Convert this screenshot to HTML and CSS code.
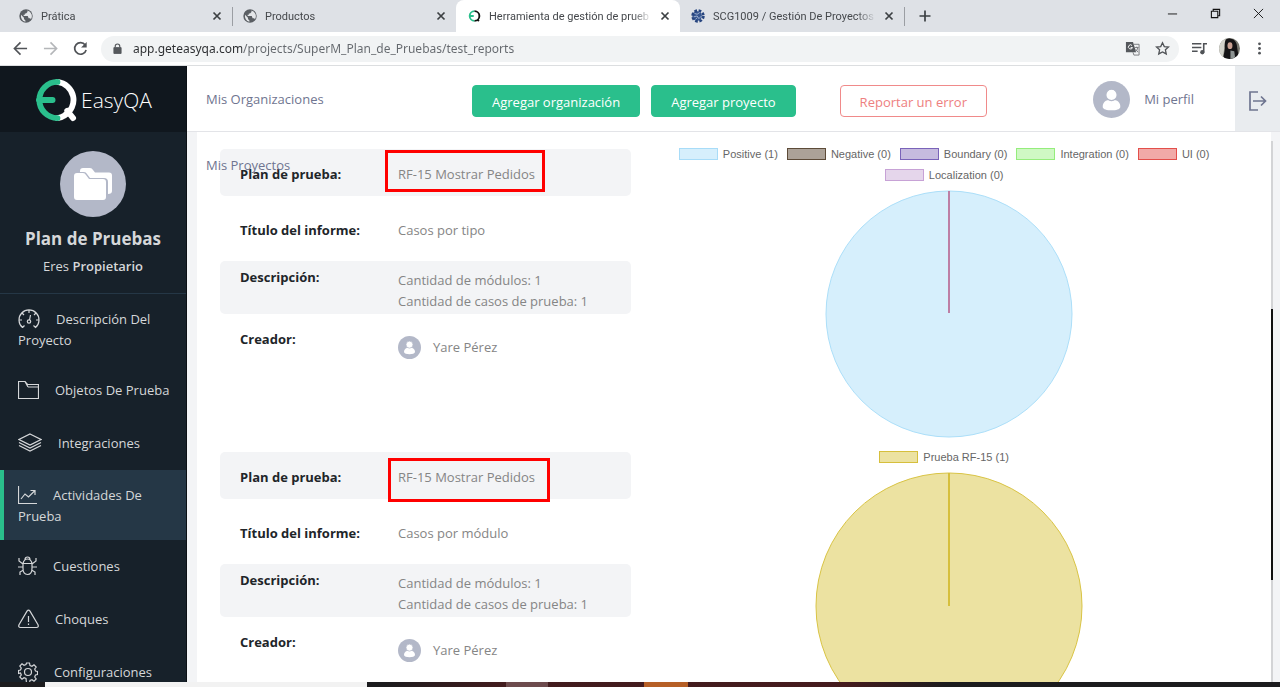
FILE: index.html
```html
<!DOCTYPE html>
<html lang="es">
<head>
  <meta charset="UTF-8" />
  <meta name="viewport" content="width=device-width, initial-scale=1.0" />
  <title>Herramienta de gestión de pruebas</title>
  <link rel="stylesheet" href="styles.css">
</head>
<body>
  <svg class="defs" aria-hidden="true">
    <symbol id="globe" viewBox="0 0 24 24">
      <circle cx="12" cy="12" r="11.5" fill="#5a5e63"/>
      <path d="M3.5 10l5 5v2l2.500 2.500v2.500A10 10 0 0 1 3.500 10z" fill="#e4e6e9"/>
      <path d="M14.500 2.500v2.500l-2.500 2.500H10V10H8v2h7l1.500 4H19l1.500 1.500A10 10 0 0 0 14.500 2.500z" fill="#e4e6e9"/>
    </symbol>
    <symbol id="close" viewBox="0 0 10 10">
      <path d="M1.500 1.500l7 7M8.500 1.500l-7 7" stroke="#3c4043" stroke-width="1.700"/>
    </symbol>
    <symbol id="user" viewBox="0 0 36 36">
      <circle cx="18" cy="18" r="18" fill="#b3b8c8"/>
      <path d="M18 18c6 0 9 3.500 8.500 7.500-.3 2-4 3-8.500 3s-8.200-1-8.500-3C9 21.500 12 18 18 18z" fill="#fff"/>
      <circle cx="18" cy="13.500" r="5.500" fill="#fff" stroke="#b3b8c8" stroke-width="1.200"/>
    </symbol>
  </svg>

  <div class="tabs">
    <div class="tab">
      <svg class="favicon"><use href="#globe"/></svg>
      <span class="tab-title">Prática</span>
      <button class="tab-close" aria-label="Cerrar"><svg><use href="#close"/></svg></button>
    </div>
    <div class="tab divided">
      <svg class="favicon"><use href="#globe"/></svg>
      <span class="tab-title">Productos</span>
      <button class="tab-close" aria-label="Cerrar"><svg><use href="#close"/></svg></button>
    </div>
    <div class="tab active">
      <svg class="favicon" viewBox="-4 -4 52 52" fill="none" stroke-width="7">
        <path d="M24 4a18 18 0 0 0 0 36M8 22h13" stroke="#2abf8c"/>
        <path d="M24 4a18 18 0 0 1 0 36M34 34l6 7" stroke="#111"/>
      </svg>
      <span class="tab-title">Herramienta de gestión de prueb</span>
      <button class="tab-close" aria-label="Cerrar"><svg><use href="#close"/></svg></button>
    </div>
    <div class="tab">
      <svg class="favicon" viewBox="0 0 16 16">
        <circle cx="7" cy="8" r="5.500" fill="#36558f"/>
        <circle cx="8" cy="8" r="6.200" fill="none" stroke="#27457f" stroke-width="3" stroke-dasharray="3 1.870"/>
        <path d="M4 5l3 1 3-2M3 9l4-1 2 3 3-3M5 12l2-2" stroke="#a9b9d6" fill="none"/>
      </svg>
      <span class="tab-title">SCG1009 / Gestión De Proyectos</span>
      <button class="tab-close" aria-label="Cerrar"><svg><use href="#close"/></svg></button>
    </div>
    <button class="new-tab" aria-label="Nueva pestaña">
      <svg viewBox="0 0 12 12"><path d="M6 .5v11M.5 6h11" stroke="#3c4043" stroke-width="1.700"/></svg>
    </button>
    <div class="window-buttons">
      <button aria-label="Minimizar"><svg viewBox="0 0 12 12"><path d="M1 6.500h10" stroke="#111"/></svg></button>
      <button aria-label="Restaurar"><svg viewBox="0 0 12 12" fill="none" stroke="#111" stroke-width="1.200"><path d="M1.500 3.500h7v7h-7zM3.500 3.500v-2h7v7h-2"/></svg></button>
      <button aria-label="Cerrar ventana"><svg viewBox="0 0 12 12"><path d="M1 1l10 10M11 1L1 11" stroke="#111"/></svg></button>
    </div>
  </div>

  <div class="toolbar">
    <button class="tool" aria-label="Atrás"><svg viewBox="0 0 16 16" fill="none" stroke="#505357" stroke-width="1.700"><path d="M15 8H2M8 1.500L1.500 8 8 14.500"/></svg></button>
    <button class="tool" aria-label="Adelante"><svg viewBox="0 0 16 16" fill="none" stroke="#b4b6b9" stroke-width="1.700"><path d="M1 8h13M8 1.500L14.500 8 8 14.500"/></svg></button>
    <button class="tool" aria-label="Recargar"><svg viewBox="0 0 16 16"><path d="M13 4.200A6.200 6.200 0 1 0 14 9.500" fill="none" stroke="#505357" stroke-width="1.800"/><path d="M14.600 1v6H8.600z" fill="#505357"/></svg></button>
    <div class="omnibox">
      <svg class="lock" viewBox="0 0 10 12"><path d="M1 5h8v6.500H1z" fill="#55585c" stroke="#55585c" stroke-linejoin="round"/><path d="M2.500 5V3.500a2.500 2.500 0 0 1 5 0V5" fill="none" stroke="#55585c" stroke-width="1.300"/></svg>
      <input class="url" type="text" aria-label="Dirección" value="app.geteasyqa.com/projects/SuperM_Plan_de_Pruebas/test_reports">
      <button class="tool" aria-label="Traducir">
        <svg viewBox="0 0 16 16"><path d="M1 1h7.500l3.500 11H1z" fill="#55585c"/><path d="M9.500 3.500h5.500v11.500H9.500L8.500 12" fill="none" stroke="#777a7e"/><path d="M7.500 4.800A2.200 2.200 0 1 0 8 7H6" fill="none" stroke="#fff"/><path d="M10.500 7h4M12.500 6v1M13.500 7c0 2-1.500 4-2.500 4.500M11.500 9l2.500 3" fill="none" stroke="#777a7e"/></svg>
      </button>
      <button class="tool" aria-label="Marcador">
        <svg viewBox="0 0 16 16"><path d="M8 1.800l1.900 4.100 4.500.5-3.300 3 .9 4.400-4-2.200-4 2.200.9-4.400-3.300-3 4.500-.5z" fill="none" stroke="#505357" stroke-width="1.400"/></svg>
      </button>
    </div>
    <button class="tool" aria-label="Multimedia"><svg viewBox="0 0 16 16"><path d="M0 3h10M0 7h10M0 11h6M12.500 12V3H16" fill="none" stroke="#505357" stroke-width="1.700"/><circle cx="11" cy="12" r="2.300" fill="#505357"/></svg></button>
    <button class="tool profile" aria-label="Perfil">
      <svg viewBox="0 0 22 22">
        <clipPath id="round"><circle cx="11" cy="11" r="11"/></clipPath>
        <g clip-path="url(#round)">
          <path d="M0 0h22v22H0z" fill="#77776f"/>
          <path d="M0 0h7l-3 22H0z" fill="#d3d3cb"/>
          <path d="M8 1c7-2 11 3 11 9l2 12H5c-1-5 2-8 1-13 0-4 0-6 2-8z" fill="#151416"/>
          <ellipse cx="11.500" cy="8" rx="2.600" ry="3.600" fill="#c9a193"/>
          <path d="M12 13l4 1 1 8h-5z" fill="#8d9392"/>
        </g>
      </svg>
    </button>
    <button class="tool" aria-label="Menú"><svg viewBox="0 0 16 16" fill="#505357"><circle cx="8" cy="3" r="1.500"/><circle cx="8" cy="8" r="1.500"/><circle cx="8" cy="13" r="1.500"/></svg></button>
  </div>

  <div class="app">
    <aside class="sidebar">
      <a class="logo" href="#">
        <svg viewBox="0 0 44 44" fill="none" stroke-linecap="round">
          <path d="M24 3.500a18.500 18.500 0 0 1 7 34.500q-3 2-7 2.500M34 33l6 7.500" stroke="#fff" stroke-width="6"/>
          <path d="M24 3.500A18.500 18.500 0 1 0 24 40.500M5 22h14" stroke="#2abf8c" stroke-width="6"/>
        </svg>
        <span>EasyQA</span>
      </a>
      <div class="project">
        <svg class="project-icon" viewBox="0 0 66 66">
          <circle cx="33" cy="33" r="33" fill="#b3b8c8"/>
          <path d="M20 21v-1q0-3 3-3h7q2 0 3 2l2 2.500h14q3 0 3 3V40q0 3-4 3V31q0-4-4-4H30l-3-4q-1-2-3-2z" fill="#fff"/>
          <path d="M14 25q0-3 3-3h6q2 0 3 2l3 4h14q3 0 3 3v15q0 3-3 3H17q-3 0-3-3z" fill="#fff"/>
        </svg>
        <h2>Plan de Pruebas</h2>
        <p>Eres <strong>Propietario</strong></p>
      </div>
      <nav class="menu">
        <a href="#">
          <svg width="22" height="20" viewBox="0 0 22 20"><path d="M4.500 18.500a10 10 0 1 1 13 0l-2-2M4.500 18.500l2-2M11 1v3M4 4l2 2M18 4l-2 2M1 11h3M21 11h-3M12.500 6l-1 5"/><circle cx="11" cy="12.500" r="1.700"/></svg>Descripción Del Proyecto</a>
        <a href="#">
          <svg width="21" height="20" viewBox="0 0 21 20"><path d="M.5 18.500v-17H7l2.500 3h11v14zM10 7h10.500M7 1.500L10 7"/></svg>Objetos De Prueba</a>
        <a href="#">
          <svg width="24" height="20" viewBox="0 0 24 20"><path d="M12 1l11 5.500L12 12 1 6.500zM1 9.500L12 15l11-5.500M1 12.500L12 18l11-5.500"/></svg>Integraciones</a>
        <a class="current" href="#">
          <svg width="19" height="20" viewBox="0 0 19 20"><path d="M.5 1v17.500H19M3 14l4-5 3.500 3 6.500-6.500M12.500 5.500H17V10"/></svg>Actividades De Prueba</a>
        <a href="#">
          <svg width="19" height="20" viewBox="0 0 19 20"><path d="M5 7.500h9v5q0 6-4.500 6T5 12.500zM5 7.500Q6 3 9.500 3T14 7.500M7 3.500Q7 1 9.500 1T12 3.500M1 2v3l4 3M18 2v3l-4 3M0 11h5M14 11h5M5.500 14L2 16v3M13.500 14l3.500 2v3"/></svg>Cuestiones</a>
        <a href="#">
          <svg width="21" height="20" viewBox="0 0 21 20"><path d="M9 2.200q1.500-2 3 0l8 13.500q1 2.800-1.500 2.800h-16q-2.500 0-1.500-2.800zM10.500 7v6M10.500 14.500v1.500"/></svg>Choques</a>
        <a href="#">
          <svg width="20" height="20" viewBox="0 0 20 20"><circle cx="10" cy="10" r="3.500"/><path d="M8.500 1h3l.5 2.500 2 .8 2-1.500 2.200 2.200-1.500 2 .8 2 2 .5v3l-2 .5-.8 2 1.500 2-2.200 2.200-2-1.500-2 .8-.5 2.500h-3L8 16.500l-2-.8-2 1.500L1.800 15l1.500-2-.8-2L.5 11.500v-3L2.500 8l.8-2-1.500-2L4 1.800l2 1.500 2-.8z"/></svg>Configuraciones</a>
      </nav>
    </aside>

    <div class="page">
      <header class="header">
        <nav class="links">
          <a href="#">Mis Organizaciones</a>
          <a href="#">Mis Proyectos</a>
        </nav>
        <div class="actions">
          <button class="btn">Agregar organización</button>
          <button class="btn">Agregar proyecto</button>
          <button class="btn btn-outline">Reportar un error</button>
        </div>
        <a class="me" href="#">
          <svg><use href="#user"/></svg>
          <span>Mi perfil</span>
        </a>
        <button class="logout" aria-label="Salir">
          <svg viewBox="0 0 18 20" fill="none" stroke="#6f7590" stroke-width="1.700"><path d="M9 1H1v18h8M4 10h12.500M12 5.500l4.500 4.500-4.500 4.500"/></svg>
        </button>
      </header>

      <main class="content">
        <div class="panel">
          <section class="report">
            <dl class="details">
              <div class="row shaded">
                <dt>Plan de prueba:</dt>
                <dd class="marked">RF-15 Mostrar Pedidos<span class="mark"></span></dd>
              </div>
              <div class="row">
                <dt>Título del informe:</dt>
                <dd>Casos por tipo</dd>
              </div>
              <div class="row tall shaded">
                <dt>Descripción:</dt>
                <dd>Cantidad de módulos: 1<br>Cantidad de casos de prueba: 1</dd>
              </div>
              <div class="row tall">
                <dt>Creador:</dt>
                <dd class="creator"><svg><use href="#user"/></svg>Yare Pérez</dd>
              </div>
            </dl>
            <div class="chart">
              <ul class="legend">
                <li><i class="swatch positive"></i>Positive (1)</li>
                <li><i class="swatch negative"></i>Negative (0)</li>
                <li><i class="swatch boundary"></i>Boundary (0)</li>
                <li><i class="swatch integration"></i>Integration (0)</li>
                <li><i class="swatch ui"></i>UI (0)</li>
                <li><i class="swatch localization"></i>Localization (0)</li>
              </ul>
              <svg class="pie" viewBox="0 0 248 248">
                <circle cx="124" cy="124" r="123" fill="#d6effc" stroke="#acdff9"/>
                <path d="M124 1v122" stroke="#bd7fa5" stroke-width="2"/>
              </svg>
            </div>
          </section>

          <section class="report">
            <dl class="details">
              <div class="row shaded">
                <dt>Plan de prueba:</dt>
                <dd class="marked">RF-15 Mostrar Pedidos<span class="mark mark-low"></span></dd>
              </div>
              <div class="row">
                <dt>Título del informe:</dt>
                <dd>Casos por módulo</dd>
              </div>
              <div class="row tall shaded">
                <dt>Descripción:</dt>
                <dd>Cantidad de módulos: 1<br>Cantidad de casos de prueba: 1</dd>
              </div>
              <div class="row tall">
                <dt>Creador:</dt>
                <dd class="creator"><svg><use href="#user"/></svg>Yare Pérez</dd>
              </div>
            </dl>
            <div class="chart">
              <ul class="legend">
                <li><i class="swatch module"></i>Prueba RF-15 (1)</li>
              </ul>
              <svg class="pie pie-large" viewBox="0 0 268 268">
                <circle cx="134" cy="134" r="133" fill="#ece2a1" stroke="#d9c445"/>
                <path d="M134 1v133" stroke="#d6bf3c" stroke-width="2"/>
              </svg>
            </div>
          </section>
        </div>
        <div class="scroll"><div class="thumb"></div></div>
      </main>
    </div>
  </div>

  <div class="taskbar">
    <span class="search"></span>
    <span class="task"></span>
    <span class="task-open"></span>
  </div>
</body>
</html>
```
FILE: styles.css
```css
:root {
  --green: #2abf8c;
  --side: #17212a;
  --side-dark: #10171e;
  --side-active: #253746;
  --muted: #6f7590;
  --text: #212529;
  --value: #858585;
  --gray: #f3f4f6;
}

* {
  box-sizing: border-box;
}

body {
  margin: 0;
  height: 100vh;
  overflow: hidden;
  display: flex;
  flex-direction: column;
  font-family: "Open Sans", "Noto Sans", sans-serif;
  font-size: 13px;
  line-height: 21px;
  color: var(--text);
}

button {
  padding: 0;
  border: none;
  background: none;
  font: inherit;
  cursor: pointer;
}

a {
  color: inherit;
  text-decoration: none;
}

svg {
  display: block;
  flex-shrink: 0;
}

.defs {
  position: absolute;
  width: 0;
  height: 0;
}

/* browser tabs */
.tabs {
  display: flex;
  flex-shrink: 0;
  height: 32px;
  padding-left: 8px;
  background: #dee1e6;
}

.tab {
  display: flex;
  align-items: center;
  flex: 0 1 224px;
  min-width: 0;
  padding: 0 10px 0 11px;
  font-family: Roboto, "Open Sans", sans-serif;
  font-size: 11px;
  color: #45484c;
}

.tab.divided {
  background: linear-gradient(#9b9ea3, #9b9ea3) left center / 1px 19px no-repeat;
}

.tab.active {
  background: #fff;
  border-radius: 8px 8px 0 0;
}

.favicon {
  width: 14px;
  height: 14px;
  margin-right: 8px;
}

.tab-title {
  flex: 1;
  overflow: hidden;
  white-space: nowrap;
  -webkit-mask-image: linear-gradient(90deg, #000 88%, transparent);
  mask-image: linear-gradient(90deg, #000 88%, transparent);
}

.tab-close {
  margin-left: 8px;
}

.tab-close svg {
  width: 10px;
  height: 10px;
}

.new-tab {
  width: 42px;
  background: linear-gradient(#9b9ea3, #9b9ea3) left center / 1px 19px no-repeat;
}

.new-tab svg {
  width: 12px;
  height: 12px;
  margin: 0 auto;
}

.window-buttons {
  display: flex;
  margin-left: auto;
}

.window-buttons button {
  width: 43px;
  height: 27px;
}

.window-buttons svg {
  width: 11px;
  height: 11px;
  margin: 0 auto;
}

/* address bar */
.toolbar {
  display: flex;
  align-items: center;
  flex-shrink: 0;
  height: 34px;
  padding: 0 6px 0 5px;
  border-bottom: 1px solid #dcdee0;
  background: #fff;
}

.tool {
  width: 30px;
}

.tool svg {
  width: 15px;
  height: 15px;
  margin: 0 auto;
}

.tool.profile svg {
  width: 21px;
  height: 21px;
}

.omnibox {
  display: flex;
  align-items: center;
  flex: 1;
  height: 26px;
  margin: 0 5px 0 6px;
  padding: 0 2px 0 12px;
  border-radius: 13px;
  background: #f1f3f4;
}

.lock {
  width: 9px;
  height: 11px;
  margin-right: 11px;
}

/* the host part of the address is darker than the path */
.url {
  flex: 1;
  padding: 0;
  border: none;
  outline: none;
  font-family: "Noto Sans", "Open Sans", sans-serif;
  font-size: 12px;
  background: linear-gradient(90deg, #2b2d30 109px, #64686d 109px);
  -webkit-background-clip: text;
  background-clip: text;
  -webkit-text-fill-color: transparent;
}

/* application */
.app {
  display: flex;
  flex: 1;
  min-height: 0;
}

.sidebar {
  width: 187px;
  flex-shrink: 0;
  overflow: hidden;
  border-right: 1px solid #0b1015;
  background: var(--side);
  color: #d5d7d9;
}

.logo {
  display: flex;
  align-items: center;
  justify-content: center;
  gap: 4px;
  height: 66px;
  padding-top: 2px;
  background: var(--side-dark);
  color: #fff;
  font-size: 21px;
  font-weight: 300;
}

.logo svg {
  width: 43px;
  height: 44px;
}

.project {
  height: 162px;
  padding-top: 19px;
  border-bottom: 1px solid var(--side-active);
  text-align: center;
}

.project-icon {
  width: 66px;
  height: 66px;
  margin: 0 auto;
}

.project h2 {
  margin: 11px 0 7px;
  font-size: 17px;
  line-height: 21px;
}

.project p {
  margin: 0;
}

.project strong {
  font-weight: 600;
}

.menu a {
  display: block;
  padding: 16px 14px 16px 18px;
}

.menu a:first-child,
.menu a.current {
  padding-top: 15px;
  padding-bottom: 13px;
}

.menu a.current {
  padding-left: 14px;
  border-left: 4px solid var(--green);
  background: var(--side-active);
}

.menu svg {
  display: inline-block;
  margin: -6px 16px -2px 0;
  vertical-align: middle;
  fill: none;
  stroke: #d5d7d9;
  stroke-width: 1.2;
}

.page {
  display: flex;
  flex-direction: column;
  flex: 1;
  min-width: 0;
}

.header {
  position: relative;
  z-index: 1;
  display: flex;
  align-items: center;
  flex-shrink: 0;
  height: 66px;
  padding-left: 19px;
  border-bottom: 1px solid #e3e4e8;
  background: #fff;
  color: var(--muted);
}

.links {
  align-self: flex-start;
  width: 266px;
  height: 65px;
}

.links a {
  display: block;
  width: max-content;
  line-height: 66px;
}

.actions {
  display: flex;
  gap: 11px;
  padding-top: 5px;
}

.btn {
  height: 32px;
  padding: 2px 19px 0;
  border: 1px solid var(--green);
  border-radius: 4px;
  background: var(--green);
  color: #fff;
  font-weight: 500;
}

.btn-outline {
  margin-left: 33px;
  border-color: #f08a8a;
  background: #fff;
  color: #ee8080;
  font-weight: 400;
}

.me {
  display: flex;
  align-items: center;
  gap: 14px;
  margin-left: auto;
  margin-right: 41px;
  padding-top: 1px;
}

.me svg {
  width: 37px;
  height: 37px;
}

.logout {
  align-self: stretch;
  width: 45px;
  background: #e9ecef;
}

.logout svg {
  width: 18px;
  height: 20px;
  margin: 4px auto 0;
}

.content {
  display: flex;
  flex: 1;
  min-height: 0;
  padding-left: 10px;
  background: var(--gray);
}

.panel {
  flex: 1;
  overflow: hidden;
  padding: 17px 34px 0 23px;
  background: #fff;
}

.report {
  display: grid;
  grid-template-columns: 5fr 7fr;
  gap: 30px;
  height: 303px;
}

.details {
  margin: 0;
}

.row {
  display: grid;
  grid-template-columns: 158px 1fr;
  margin-bottom: 9px;
  padding: 15px 0 11px 20px;
  border-radius: 5px;
}

.row.shaded {
  background: var(--gray);
}

.row.tall {
  padding-top: 6px;
  padding-bottom: 2px;
}

.row.tall dd {
  padding-top: 3px;
}

.row dt {
  font-weight: 700;
}

.row dd {
  margin: 0;
  color: var(--value);
}

.row.tall .creator {
  display: flex;
  align-items: center;
  gap: 12px;
  padding-top: 7px;
}

.creator svg {
  width: 23px;
  height: 23px;
}

.marked {
  position: relative;
}

.mark {
  position: absolute;
  top: -14px;
  left: -13px;
  width: 160px;
  height: 42px;
  border: 3px solid #f00;
}

.mark-low {
  top: -9px;
  left: -10px;
  width: 162px;
  height: 44px;
}

.legend {
  display: flex;
  flex-wrap: wrap;
  justify-content: center;
  margin: 0 10px -1px 0;
  padding: 0;
  gap: 0 9px;
  list-style: none;
  font-family: "Liberation Sans", Arial, sans-serif;
  font-size: 11px;
  line-height: 10px;
  color: #666;
}

.legend li {
  display: flex;
  align-items: center;
  height: 21px;
  padding-bottom: 11px;
}

.swatch {
  width: 39px;
  height: 12px;
  margin-right: 5px;
  border: 1px solid;
}

.positive { background: #d6effc; border-color: #a8dcf8; }
.negative { background: #aca298; border-color: #5d4b38; }
.boundary { background: #c6bbdf; border-color: #7a63b9; }
.integration { background: #cff8c4; border-color: #95ed7c; }
.ui { background: #f1aaa8; border-color: #e34f4b; }
.localization { background: #e5d6eb; border-color: #c7a2d6; }
.module { background: #ece2a1; border-color: #d6bf3c; }

.pie {
  width: 248px;
  height: 248px;
  margin: 0 auto;
}

.pie-large {
  width: 268px;
  height: 268px;
}

.scroll {
  width: 9px;
  padding-top: 9px;
  background: linear-gradient(#d3d4d6, #d3d4d6) left 9px / 2px 100% no-repeat;
}

.thumb {
  width: 2px;
  height: 50%;
  margin-top: 168px;
  background: #111;
}

/* desktop taskbar */
.taskbar {
  display: flex;
  flex-shrink: 0;
  height: 5px;
  padding-left: 45px;
  background: linear-gradient(90deg, #1c1c1e 30%, #421c1e 39%, #451b1e 66%, #1c1c1e 74%);
}

.search {
  width: 322px;
  margin-right: 139px;
  background: #f2f2f2;
}

.task {
  width: 42px;
  margin-right: 96px;
  background: #6d4b4d;
}

.task-open {
  width: 44px;
  background: #b65f26;
}
```
